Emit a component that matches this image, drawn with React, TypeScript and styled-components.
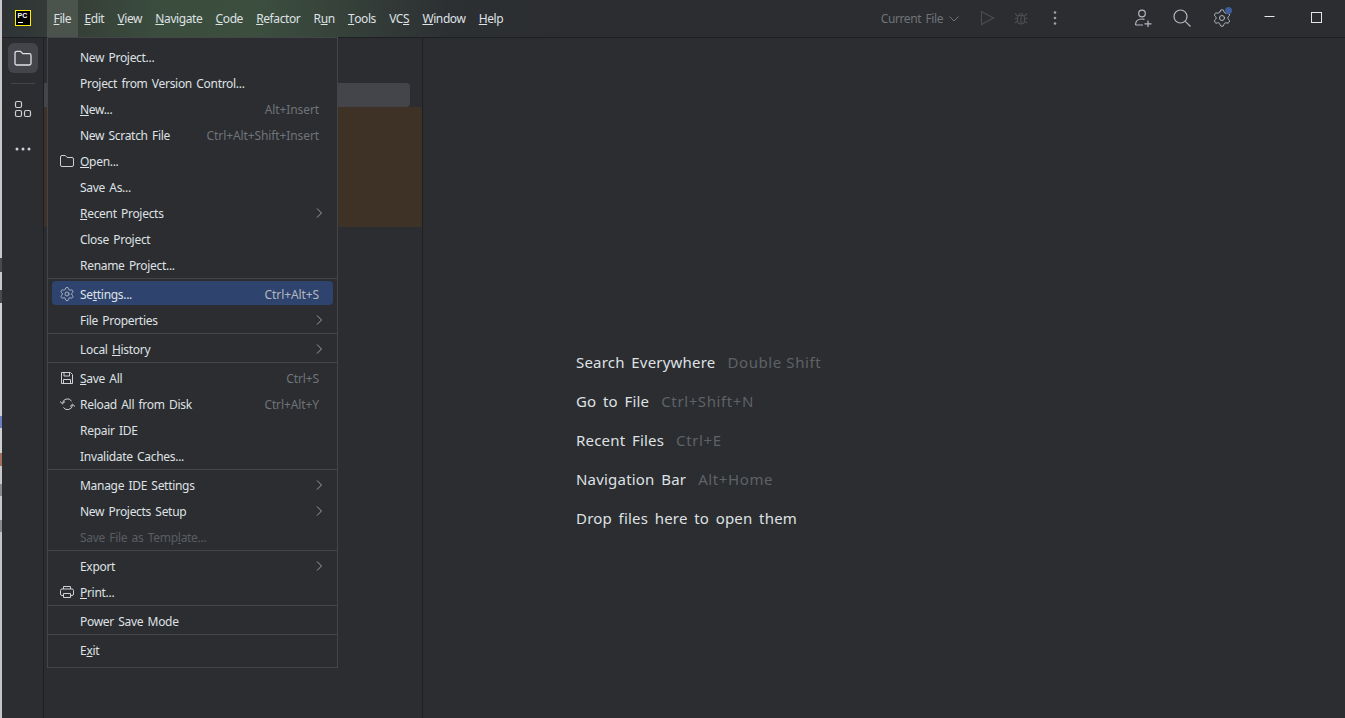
import * as React from 'react'
import styled, { createGlobalStyle } from 'styled-components'
import { Settings } from 'lucide-react'

const UI_FONT = '"Noto Sans", "Open Sans", sans-serif'

const GlobalStyle = createGlobalStyle`
  html, body {
    margin: 0;
    padding: 0;
    height: 100%;
    background: #2b2d30;
    overflow: hidden;
  }
`

type MenuEntry = {
  label: string
  mnemonic?: number
  shortcut?: string
  icon?: 'folder' | 'gear' | 'save' | 'reload' | 'print'
  submenu?: boolean
  disabled?: boolean
  active?: boolean
}

const menuGroups: MenuEntry[][] = [
  [
    { label: 'New Project...' },
    { label: 'Project from Version Control...' },
    { label: 'New...', mnemonic: 0, shortcut: 'Alt+Insert' },
    { label: 'New Scratch File', shortcut: 'Ctrl+Alt+Shift+Insert' },
    { label: 'Open...', mnemonic: 0, icon: 'folder' },
    { label: 'Save As...' },
    { label: 'Recent Projects', mnemonic: 0, submenu: true },
    { label: 'Close Project' },
    { label: 'Rename Project...' },
  ],
  [
    { label: 'Settings...', mnemonic: 2, shortcut: 'Ctrl+Alt+S', icon: 'gear', active: true },
    { label: 'File Properties', submenu: true },
  ],
  [{ label: 'Local History', mnemonic: 6, submenu: true }],
  [
    { label: 'Save All', mnemonic: 0, shortcut: 'Ctrl+S', icon: 'save' },
    { label: 'Reload All from Disk', shortcut: 'Ctrl+Alt+Y', icon: 'reload' },
    { label: 'Repair IDE' },
    { label: 'Invalidate Caches...' },
  ],
  [
    { label: 'Manage IDE Settings', submenu: true },
    { label: 'New Projects Setup', submenu: true },
    { label: 'Save File as Template...', disabled: true, mnemonic: 17 },
  ],
  [
    { label: 'Export', submenu: true },
    { label: 'Print...', mnemonic: 0, icon: 'print' },
  ],
  [{ label: 'Power Save Mode' }],
  [{ label: 'Exit', mnemonic: 1 }],
]

const topMenus: { label: string; mnemonic: number }[] = [
  { label: 'File', mnemonic: 0 },
  { label: 'Edit', mnemonic: 0 },
  { label: 'View', mnemonic: 0 },
  { label: 'Navigate', mnemonic: 0 },
  { label: 'Code', mnemonic: 0 },
  { label: 'Refactor', mnemonic: 0 },
  { label: 'Run', mnemonic: 1 },
  { label: 'Tools', mnemonic: 0 },
  { label: 'VCS', mnemonic: 2 },
  { label: 'Window', mnemonic: 0 },
  { label: 'Help', mnemonic: 0 },
]

const hints = [
  { label: 'Search Everywhere', keys: 'Double Shift' },
  { label: 'Go to File', keys: 'Ctrl+Shift+N' },
  { label: 'Recent Files', keys: 'Ctrl+E' },
  { label: 'Navigation Bar', keys: 'Alt+Home' },
  { label: 'Drop files here to open them' },
]

const withMnemonic = (label: string, index?: number) => {
  if (index === undefined) return label
  return (
    <>
      {label.slice(0, index)}
      <u>{label[index]}</u>
      {label.slice(index + 1)}
    </>
  )
}

const MenuIcon = ({ name }: { name: NonNullable<MenuEntry['icon']> }) => {
  if (name === 'gear') return <Settings size={16} color="#ced0d6" strokeWidth={1.1} />
  return (
    <svg width="16" height="16" viewBox="0 0 16 16" fill="none" stroke="#ced0d6" strokeWidth="1">
      {name === 'folder' && (
        <path d="M1.500 4A1.500 1.500 0 0 1 3 2.500h3.200l2 2H13A1.500 1.500 0 0 1 14.500 6v6a1.500 1.500 0 0 1-1.500 1.500H3A1.500 1.500 0 0 1 1.500 12z" />
      )}
      {name === 'save' && (
        <>
          <path d="M2.500 2.500h9l2 2v9h-11z" />
          <path d="M5 2.500v3.500h5.500V2.500M4.500 13.500V9.500h7v4" />
        </>
      )}
      {name === 'reload' && (
        <>
          <path d="M3.500 7.500A5 5 0 0 1 12.600 5" />
          <path d="M13.500 9A5 5 0 0 1 4.400 11.500" />
          <path d="M1 5.500l2.500 2.300L6 5.500M11 10.500l2.500-2.300 2.500 2.300" />
        </>
      )}
      {name === 'print' && (
        <>
          <path d="M4.500 5V2.500h7V5" />
          <path d="M4.500 11.500H3A1.500 1.500 0 0 1 1.500 10V6.500A1.500 1.500 0 0 1 3 5h10a1.500 1.500 0 0 1 1.500 1.500V10a1.500 1.500 0 0 1-1.500 1.500h-1.500" />
          <path d="M4.500 9.500h7v4h-7z" />
        </>
      )}
    </svg>
  )
}

const App = () => (
  <Window>
    <GlobalStyle />
    <BackdropStrip />
    <Frame>
      <TitleBar>
        <LogoCell>
          <Logo>
            <LogoText>PC</LogoText>
            <LogoDash />
          </Logo>
        </LogoCell>
        <MenuBar>
          {topMenus.map((item, i) => (
            <TopMenu key={item.label} $open={i === 0}>
              {withMnemonic(item.label, item.mnemonic)}
            </TopMenu>
          ))}
        </MenuBar>
        <Spacer />
        <RunConfig>
          Current File
          <svg width="12" height="12" viewBox="0 0 12 12" fill="none" stroke="#6f737a" strokeWidth="1">
            <path d="M1.500 3.500L6 8l4.500-4.500" />
          </svg>
        </RunConfig>
        <ToolIcon $width={34}>
          <svg width="16" height="16" viewBox="0 0 16 16" fill="none" stroke="#4b4d52" strokeWidth="1.100">
            <path d="M2.500 1.500v13L14.500 8z" />
          </svg>
        </ToolIcon>
        <ToolIcon $width={34}>
          <svg width="16" height="16" viewBox="0 0 16 16" fill="none" stroke="#4b4d52" strokeWidth="1.100">
            <path d="M5.500 5.500h5l1 2v3a3.500 3.500 0 0 1-7 0v-3zM6 5.500a2 2 0 0 1 4 0M8 6v8M1.500 8.500h3M11.500 8.500h3M2 3.500l2.500 2.500M14 3.500L11.500 6M2 13l2.500-2M14 13l-2.500-2" />
          </svg>
        </ToolIcon>
        <ToolIcon $width={34}>
          <svg width="16" height="16" viewBox="0 0 16 16" fill="#9da0a8">
            <circle cx="8" cy="2.500" r="1.300" />
            <circle cx="8" cy="8" r="1.300" />
            <circle cx="8" cy="13.500" r="1.300" />
          </svg>
        </ToolIcon>
        <ActionGroup>
          <ToolIcon $width={39.5}>
            <svg width="20" height="20" viewBox="0 0 20 20" fill="none" stroke="#b4b8bf" strokeWidth="1.200">
              <circle cx="9" cy="5.500" r="3.300" />
              <path d="M2.500 17c0-4 2.500-6 6.500-6 1 0 1.800.1 2.500.4M2.500 17H10M15 12.500v6.500M11.500 15.800h7" />
            </svg>
          </ToolIcon>
          <ToolIcon $width={39.5}>
            <svg width="20" height="20" viewBox="0 0 20 20" fill="none" stroke="#b4b8bf" strokeWidth="1.200">
              <circle cx="8.500" cy="8.500" r="6.500" />
              <path d="M13.300 13.300L18.500 18.500" />
            </svg>
          </ToolIcon>
          <ToolIcon $width={39.5}>
            <Settings size={20} color="#b4b8bf" strokeWidth={1.200} />
            <NotificationDot />
          </ToolIcon>
        </ActionGroup>
        <WindowControls>
          <WindowButton>
            <svg width="11" height="11" viewBox="0 0 11 11" stroke="#e6e6e6" strokeWidth="1">
              <path d="M.500 4.500h10" />
            </svg>
          </WindowButton>
          <WindowButton>
            <svg width="11" height="11" viewBox="0 0 11 11" fill="none" stroke="#e6e6e6" strokeWidth="1">
              <rect x=".500" y=".500" width="10" height="10" />
            </svg>
          </WindowButton>
        </WindowControls>
      </TitleBar>
      <Workspace>
        <Stripe>
          <StripeButton $selected>
            <svg width="20" height="20" viewBox="0 0 20 20" fill="none" stroke="#dfe1e5" strokeWidth="1.300">
              <path d="M2 5A1.700 1.700 0 0 1 3.700 3.300h3.800l2.300 2.400h6.500A1.700 1.700 0 0 1 18 7.400v7.900a1.700 1.700 0 0 1-1.700 1.700H3.700A1.700 1.700 0 0 1 2 15.300z" />
            </svg>
          </StripeButton>
          <StripeDivider />
          <StripeButton>
            <svg width="20" height="20" viewBox="0 0 20 20" fill="none" stroke="#ced0d6" strokeWidth="1.200">
              <rect x="2.500" y="2.500" width="6" height="6" rx="1.500" />
              <rect x="2.500" y="11.500" width="6" height="6" rx="1.500" />
              <rect x="11.500" y="11.500" width="6" height="6" rx="1.500" />
            </svg>
          </StripeButton>
          <StripeButton>
            <svg width="20" height="20" viewBox="0 0 20 20" fill="#ced0d6">
              <circle cx="4" cy="10" r="1.500" />
              <circle cx="10" cy="10" r="1.500" />
              <circle cx="16" cy="10" r="1.500" />
            </svg>
          </StripeButton>
        </Stripe>
        <ProjectPane>
          <SearchField />
          <Banner />
        </ProjectPane>
        <Editor>
          <HintList>
            {hints.map((hint) => (
              <HintRow key={hint.label}>
                <span>{hint.label}</span>
                {hint.keys && <HintKeys>{hint.keys}</HintKeys>}
              </HintRow>
            ))}
          </HintList>
        </Editor>
      </Workspace>
    </Frame>
    <FileMenu>
      {menuGroups.map((group, g) => (
        <MenuGroup key={g}>
          {group.map((entry) => (
            <MenuRow key={entry.label} $active={entry.active} $disabled={entry.disabled}>
              <IconSlot>{entry.icon && <MenuIcon name={entry.icon} />}</IconSlot>
              <MenuLabel>{withMnemonic(entry.label, entry.mnemonic)}</MenuLabel>
              {entry.shortcut && <Shortcut $active={entry.active}>{entry.shortcut}</Shortcut>}
              {entry.submenu && (
                <svg width="8" height="12" viewBox="0 0 8 12" fill="none" stroke="#9da0a8" strokeWidth="1">
                  <path d="M2 1.500L6.500 6 2 10.500" />
                </svg>
              )}
            </MenuRow>
          ))}
        </MenuGroup>
      ))}
    </FileMenu>
  </Window>
)

const Window = styled.div`
  position: relative;
  display: flex;
  width: 1345px;
  height: 718px;
  overflow: hidden;
  background: #2b2d30;
  font-family: ${UI_FONT};
`

// sliver of the window behind the IDE, with cut-off bits of its text
const BackdropStrip = styled.div`
  flex: 0 0 2px;
  background: linear-gradient(
    180deg,
    #c8c8c8 0 258px,
    #4a4a4a 258px 272px,
    #c8c8c8 272px 290px,
    #4a4a4a 290px 303px,
    #d0d0d0 303px 416px,
    #6f80c0 416px 428px,
    #d0d0d0 428px 453px,
    #a0705c 453px 466px,
    #c8c8c8 466px 484px,
    #8a8a8a 484px 496px,
    #c8c8c8 496px 520px,
    #8a8a8a 520px 532px,
    #c4c4c4 532px
  );
`

const Frame = styled.div`
  flex: 1;
  display: flex;
  flex-direction: column;
  min-width: 0;
`

const TitleBar = styled.header`
  display: flex;
  align-items: center;
  flex: 0 0 38px;
  box-sizing: border-box;
  padding-right: 5.500px;
  border-bottom: 1px solid #1e1f22;
  background: linear-gradient(90deg, #2f3336 0%, #364038 6%, #3b4e3e 12%, #3c4f3f 19%, #36423a 25%, #2d3033 33%, #2b2d30 42%);
`

const LogoCell = styled.div`
  display: flex;
  align-items: center;
  justify-content: center;
  flex: 0 0 42px;
  height: 100%;
`

const Logo = styled.div`
  position: relative;
  box-sizing: border-box;
  width: 16px;
  height: 16px;
  margin-top: -2px;
  background: #000;
  border: 1px solid #fff200;
`

const LogoText = styled.span`
  position: absolute;
  left: 1.500px;
  top: 0;
  font: 700 7px/9px "Liberation Sans", sans-serif;
  color: #fff;
`

const LogoDash = styled.span`
  position: absolute;
  left: 2px;
  bottom: 2px;
  width: 5px;
  height: 1px;
  background: #fff;
`

const MenuBar = styled.nav`
  display: flex;
  height: 100%;
  margin-left: 3px;
`

const TopMenu = styled.div<{ $open?: boolean }>`
  display: flex;
  align-items: center;
  padding: 0 6.600px;
  font-size: 12px;
  letter-spacing: -0.4px;
  white-space: pre;
  color: #dfe1e5;
  background: ${(p) => (p.$open ? '#4a544c' : 'transparent')};
`

const Spacer = styled.div`
  flex: 1;
`

const RunConfig = styled.div`
  display: flex;
  align-items: center;
  gap: 5px;
  margin-right: 10px;
  font-size: 12px;
  letter-spacing: -0.4px;
  word-spacing: 1.500px;
  color: #6f737a;
`

const ToolIcon = styled.div<{ $width: number }>`
  position: relative;
  display: flex;
  align-items: center;
  justify-content: center;
  box-sizing: border-box;
  width: ${(p) => p.$width}px;
  height: 100%;
  padding-bottom: 2px;
`

const NotificationDot = styled.span`
  position: absolute;
  top: 7px;
  right: 10px;
  width: 7px;
  height: 7px;
  border-radius: 50%;
  background: #3d5c99;
`

const ActionGroup = styled.div`
  display: flex;
  height: 100%;
  margin-left: 51px;
`

const WindowControls = styled.div`
  display: flex;
  height: 100%;
  margin-left: 4px;
`

const WindowButton = styled.div`
  display: flex;
  align-items: center;
  justify-content: center;
  box-sizing: border-box;
  width: 47px;
  height: 100%;
  padding-bottom: 3px;
`

const Workspace = styled.main`
  flex: 1;
  display: flex;
  min-height: 0;
`

const Stripe = styled.aside`
  display: flex;
  flex-direction: column;
  align-items: center;
  flex: 0 0 41px;
  padding-top: 5px;
  border-right: 1px solid #1e1f22;
`

const StripeButton = styled.div<{ $selected?: boolean }>`
  display: flex;
  align-items: center;
  justify-content: center;
  width: 30px;
  height: 30px;
  margin-bottom: 10px;
  border-radius: 6px;
  background: ${(p) => (p.$selected ? '#43454a' : 'transparent')};
`

const StripeDivider = styled.div`
  width: 24px;
  height: 1px;
  margin: 0 0 10px;
  background: #43454a;
`

const ProjectPane = styled.section`
  flex: 0 0 378px;
  padding-top: 45px;
  border-right: 1px solid #1e1f22;
`

const SearchField = styled.div`
  width: 366px;
  height: 24px;
  border-radius: 0 4px 4px 0;
  background: #43454a;
`

const Banner = styled.div`
  height: 120px;
  background: #3e3226;
`

const Editor = styled.section`
  flex: 1;
  padding: 311px 0 0 153px;
`

const HintList = styled.div`
  display: flex;
  flex-direction: column;
  gap: 14px;
`

const HintRow = styled.div`
  display: flex;
  gap: 12px;
  height: 25px;
  align-items: center;
  font-size: 15px;
  letter-spacing: 0.2px;
  word-spacing: 2.500px;
  color: #dfe1e5;
`

const HintKeys = styled.span`
  letter-spacing: 0.6px;
  word-spacing: 0;
  color: #5f6267;
`

const FileMenu = styled.div`
  position: absolute;
  left: 47px;
  top: 37px;
  width: 291px;
  box-sizing: border-box;
  border: 1px solid #43454a;
  background: #2b2d30;
`

const MenuGroup = styled.div`
  display: flex;
  flex-direction: column;
  gap: 2px;
  padding: 2px 4px;
  border-top: 1px solid #43454a;

  &:first-child {
    border-top: 0;
    padding-top: 6px;
  }

  &:last-child {
    padding-bottom: 6px;
  }
`

const MenuRow = styled.div<{ $active?: boolean; $disabled?: boolean }>`
  display: flex;
  align-items: center;
  box-sizing: border-box;
  height: 24px;
  padding: 2px 14px 0 7px;
  border-radius: 4px;
  font-size: 12px;
  letter-spacing: -0.3px;
  word-spacing: 1.500px;
  color: ${(p) => (p.$disabled ? '#5a5d63' : '#dfe1e5')};
  background: ${(p) => (p.$active ? '#2e436e' : 'transparent')};

  & > svg {
    margin-right: -4px;
  }
`

const IconSlot = styled.span`
  display: flex;
  align-items: center;
  flex: 0 0 21px;
`

const MenuLabel = styled.span`
  flex: 1;
  white-space: nowrap;
`

const Shortcut = styled.span<{ $active?: boolean }>`
  letter-spacing: -0.1px;
  word-spacing: 0;
  color: ${(p) => (p.$active ? '#b4b8bf' : '#6f737a')};
`

export default App
